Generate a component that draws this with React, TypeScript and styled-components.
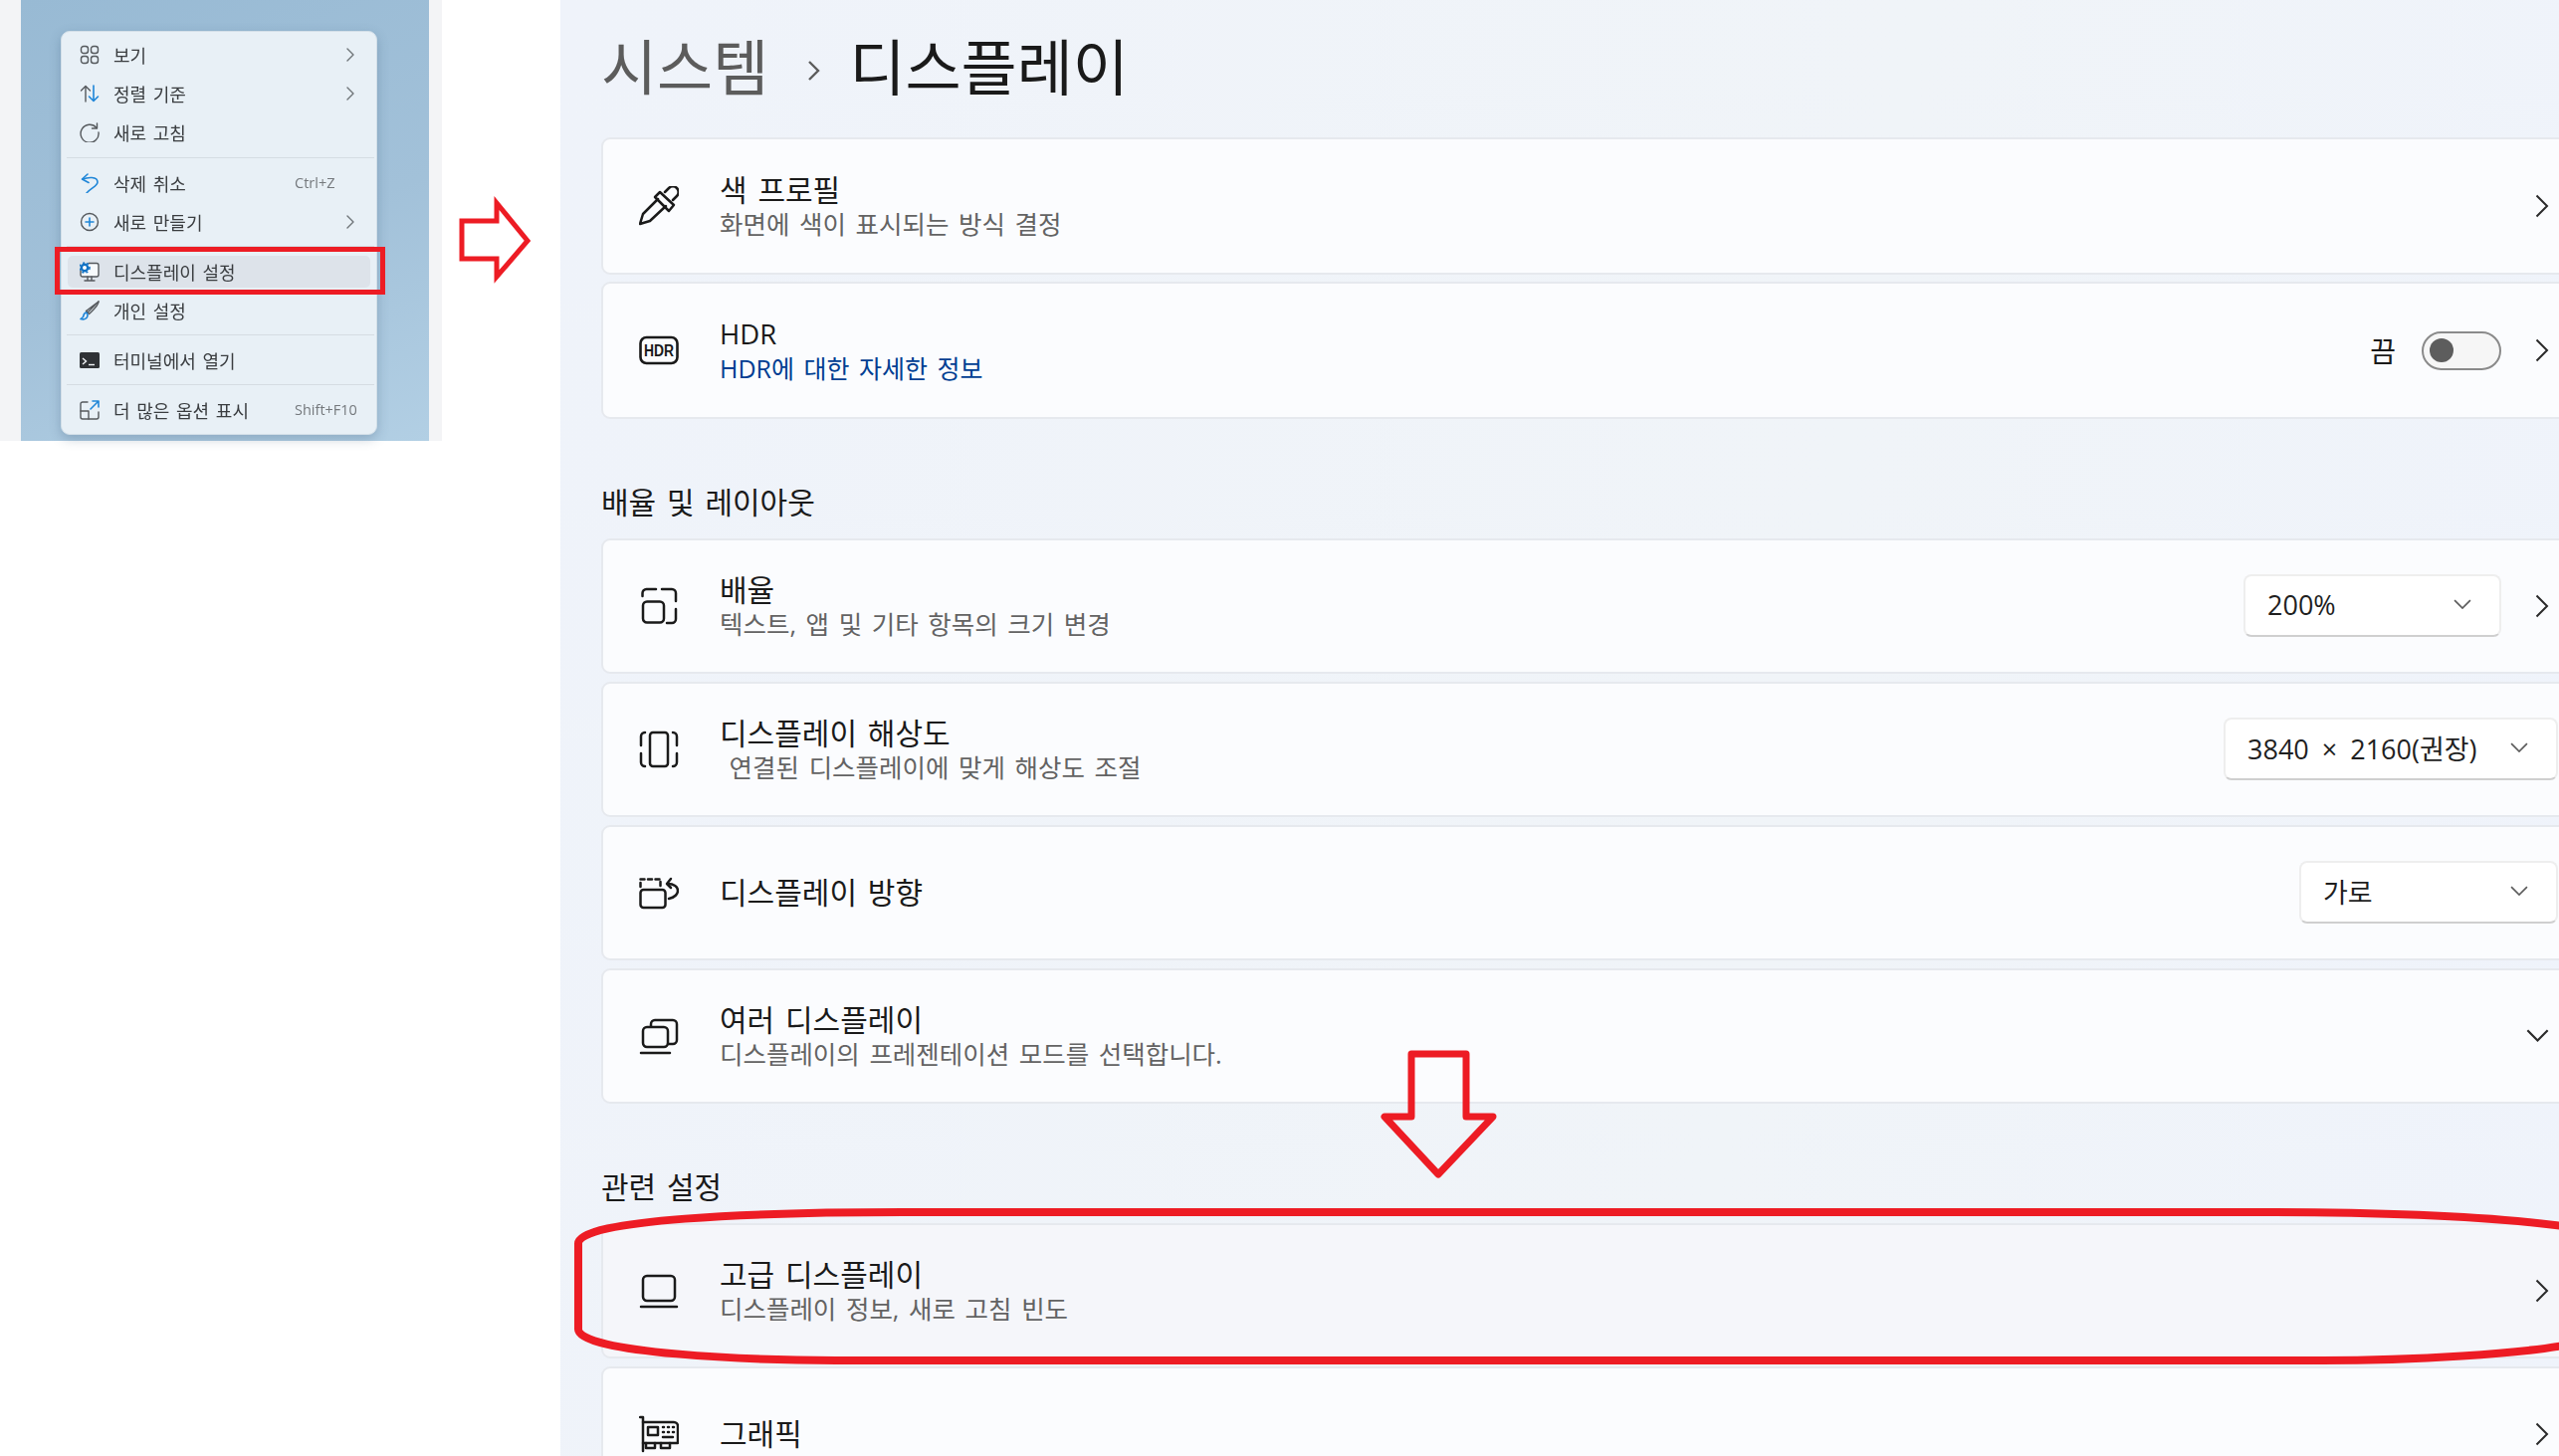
import React from 'react'
import styled, { createGlobalStyle } from 'styled-components'

const GlobalStyle = createGlobalStyle`
  html, body {
    margin: 0;
    padding: 0;
    background: #ffffff;
    overflow: hidden;
  }
  body {
    font-family: "Open Sans", "Noto Sans CJK KR", sans-serif;
    color: #1a1a1a;
  }
`

const Page = styled.div`
  position: relative;
  display: flex;
  width: 2571px;
  height: 1463px;
  overflow: hidden;
  background: #ffffff;
`

/* left: context menu capture */
const Shot = styled.div`
  flex: none;
  width: 444px;
  height: 443px;
  padding: 0 13px 0 21px;
  box-sizing: border-box;
  background: #f3f4f6;
`
const Desktop = styled.div`
  height: 100%;
  padding: 31px 0 0 40px;
  box-sizing: border-box;
  background: linear-gradient(160deg, #98bad4 0%, #a2c1d9 55%, #b2cfe4 100%);
`
const Menu = styled.div`
  display: flex;
  flex-direction: column;
  width: 318px;
  height: 406px;
  padding-top: 3px;
  box-sizing: border-box;
  background: #e8f0f6;
  border: 1px solid #d3dfe8;
  border-radius: 9px;
  box-shadow: 0 4px 12px rgba(60, 90, 120, 0.3);
  filter: blur(0.35px);
`
const MenuItem = styled.div<{ $active?: boolean }>`
  flex: none;
  display: flex;
  align-items: center;
  height: 32px;
  margin: 3.5px 6px;
  padding: 0 12px;
  gap: 14px;
  border-radius: 5px;
  background: ${({ $active }) => ($active ? '#dde3ea' : 'transparent')};
  svg {
    flex: none;
  }
`
const MenuLabel = styled.span`
  flex: 1;
  font-size: 18px;
  word-spacing: 2px;
  color: #3a3d40;
  white-space: nowrap;
`
const MenuHint = styled.span`
  flex: none;
  width: 64px;
  font-size: 14.5px;
  color: #75797d;
  white-space: nowrap;
`
const MenuSep = styled.div<{ $first?: boolean }>`
  flex: none;
  height: 1px;
  margin: ${({ $first }) => ($first ? '6px' : '5px')} 2px 5px 5px;
  background: #d5dce2;
`

/* right: settings window */
const Settings = styled.main`
  flex: none;
  width: 2027px;
  height: 1463px;
  margin-left: 119px;
  padding-left: 41px;
  box-sizing: border-box;
  background: linear-gradient(100deg, #eff3fa 0%, #f0f4f8 60%, #eff3fb 100%);
`
const Header = styled.header`
  display: flex;
  align-items: center;
  height: 138px;
  padding-bottom: 3px;
  box-sizing: border-box;
  font-size: 61px;
  line-height: 76px;
  white-space: nowrap;
`
const Crumb = styled.span`
  color: #5c5c5c;
`
const CrumbArrow = styled.span`
  display: flex;
  margin: 6px 27px 0 38px;
  color: #5c5c5c;
`
const CrumbNow = styled.span`
  color: #1a1a1a;
`
const Group = styled.section<{ $tight?: boolean }>`
  display: flex;
  flex-direction: column;
  gap: ${({ $tight }) => ($tight ? '7px' : '8px')};
`
const SectionLabel = styled.h2`
  margin: 66px 0 18px;
  font-size: 30px;
  font-weight: 400;
  line-height: 36px;
  word-spacing: 3px;
  color: #1a1a1a;
`
const Card = styled.div<{ $hover?: boolean; $tall?: boolean }>`
  flex: none;
  display: flex;
  align-items: center;
  width: 1976px;
  height: ${({ $tall }) => ($tall ? '138px' : '136px')};
  padding: 0 17px 0 36px;
  box-sizing: border-box;
  background: ${({ $hover }) => ($hover ? '#f5f6fa' : '#fbfcfe')};
  border: 2px solid #e6e9ee;
  border-radius: 9px;
`
const CardIcon = styled.div`
  flex: none;
  display: flex;
  width: 40px;
  height: 40px;
  margin-right: 41px;
  color: #1a1a1a;
`
const CardText = styled.div`
  flex: 1;
  min-width: 0;
  white-space: nowrap;
`
const CardTitle = styled.div<{ $latin?: boolean }>`
  font-size: ${({ $latin }) => ($latin ? '27.5px' : '30px')};
  line-height: 36px;
  word-spacing: 3px;
  color: #1a1a1a;
`
const CardSub = styled.div<{ $link?: boolean }>`
  font-size: ${({ $link }) => ($link ? '25px' : '25.5px')};
  line-height: 33px;
  word-spacing: 3px;
  color: ${({ $link }) => ($link ? '#003e92' : '#636363')};
`
const Arrow = styled.span`
  flex: none;
  display: flex;
  margin-left: 34px;
  color: #2a2a2a;
`
const ToggleLabel = styled.span`
  font-size: 28px;
  margin-right: 26px;
  color: #1a1a1a;
`
const Toggle = styled.span`
  flex: none;
  display: flex;
  align-items: center;
  width: 80px;
  height: 39px;
  padding-left: 6px;
  box-sizing: border-box;
  background: #f6f6f6;
  border: 2px solid #8a8a8a;
  border-radius: 20px;
  &::before {
    content: '';
    width: 24px;
    height: 24px;
    border-radius: 50%;
    background: #5d5d5d;
  }
`
const Select = styled.div<{ $width: number; $flush?: boolean }>`
  flex: none;
  display: flex;
  align-items: center;
  justify-content: space-between;
  width: ${({ $width }) => $width}px;
  height: 63px;
  margin: 0 ${({ $flush }) => ($flush ? '-9px' : '0')} 2px 0;
  padding: 0 28px 2px 22px;
  box-sizing: border-box;
  font-size: 27px;
  color: #1f1f1f;
  background: #ffffff;
  border: 2px solid #eeeeee;
  border-bottom-color: #cfcfcf;
  border-radius: 8px;
  white-space: nowrap;
  word-spacing: 6px;
`
const SelectArrow = styled.span`
  display: flex;
  color: #5c5c5c;
`
const Annotations = styled.svg`
  position: absolute;
  left: 0;
  top: 0;
  pointer-events: none;
`
const HdrText = styled.text`
  font-family: "Liberation Sans", sans-serif;
  font-size: 16px;
  font-weight: 700;
  fill: #1a1a1a;
`

const stroke = { fill: 'none', stroke: 'currentColor', strokeWidth: 2.5, strokeLinecap: 'round', strokeLinejoin: 'round' } as const
const thin = { fill: 'none', stroke: '#55595d', strokeWidth: 1.4, strokeLinecap: 'round', strokeLinejoin: 'round' } as const
const blue = { ...thin, stroke: '#1f86d8', strokeWidth: 1.6 }

const Big = ({ children }: { children: React.ReactNode }) => (
  <svg width="40" height="40" viewBox="0 0 40 40" {...stroke}>{children}</svg>
)
const Small = ({ children }: { children: React.ReactNode }) => (
  <svg width="20" height="20" viewBox="0 0 20 20" {...thin}>{children}</svg>
)

const settingsIcons: Record<string, React.ReactNode> = {
  dropper: (
    <Big>
      <path d="M19 13L4 28l-3 10 10-3 16-15" />
      <polygon points="21,6 16,11 30,25 35,19" />
      <path d="M26 6l4-4a5.6 5.6 0 0 1 8 8l-4 4" />
    </Big>
  ),
  hdr: (
    <svg width="40" height="40" viewBox="0 0 40 40">
      <rect x="1.5" y="7" width="37" height="26" rx="6" fill="none" stroke="currentColor" strokeWidth="2.6" />
      <HdrText x="20" y="26" textAnchor="middle" textLength="30" lengthAdjust="spacingAndGlyphs">HDR</HdrText>
    </svg>
  ),
  scale: (
    <Big>
      <rect x="4" y="15.5" width="21" height="21" rx="4" />
      <path d="M3.5 10V7a4 4 0 0 1 4-4H17" />
      <path d="M23 3h10a4 4 0 0 1 4 4v8" />
      <path d="M37 23v10a4 4 0 0 1-4 4h-5" />
    </Big>
  ),
  resolution: (
    <Big>
      <rect x="11" y="3" width="18" height="34" rx="3" />
      <path d="M6 3a4 4 0 0 0-4 4v9M2 24v9a4 4 0 0 0 4 4" />
      <path d="M34 3a4 4 0 0 1 4 4v9M38 24v9a4 4 0 0 1-4 4" />
    </Big>
  ),
  orientation: (
    <Big>
      <rect x="1.5" y="17" width="25" height="18" rx="3" />
      <path d="M1.5 14V6.5h20V14" strokeDasharray="4 3.5" />
      <path d="M30 26c6-1 9-5 9-8 0-4-4-7-10-7" />
      <path d="M32 6l-4 5 4 4" />
    </Big>
  ),
  multi: (
    <Big>
      <path d="M12 10V8a4 4 0 0 1 4-4h18a4 4 0 0 1 4 4v16a4 4 0 0 1-4 4h-5" />
      <rect x="4" y="11" width="25" height="20" rx="4" />
      <path d="M2 37h29" />
    </Big>
  ),
  laptop: (
    <Big>
      <rect x="4" y="5" width="32" height="25" rx="4" />
      <path d="M2 36h36" />
    </Big>
  ),
  gpu: (
    <Big>
      <path d="M1 3h3v34" />
      <path d="M4 8h31a4 4 0 0 1 4 4v17H4" />
      <rect x="9" y="13" width="10" height="8" />
      <path d="M24 13h1M29 13h1M34 13h1M24 18h1M29 18h1M34 18h1M24 23h10" />
      <path d="M7 29v5h9v-5M22 29v5h9v-5" />
    </Big>
  ),
}

const ChevronRight = () => (
  <svg width="14" height="24" viewBox="0 0 14 24" fill="none" stroke="currentColor" strokeWidth="2">
    <path d="M1.5 1.5L12 12L1.5 22.5" />
  </svg>
)
const ChevronDown = ({ size = 18 }: { size?: number }) => (
  <svg width={size} height={size / 1.7} viewBox="0 0 17 10" fill="none" stroke="currentColor" strokeWidth="1.6">
    <path d="M1 1l7.5 7.5L16 1" />
  </svg>
)
const MenuChevron = () => (
  <svg width="16" height="14" viewBox="0 0 16 14" {...thin} stroke="#6f7478">
    <path d="M5 1l6 6-6 6" />
  </svg>
)

const SettingsRow = ({ icon, title, sub, link, hover, tall, latin, children }: {
  icon: string
  title: string
  sub?: string
  link?: boolean
  hover?: boolean
  tall?: boolean
  latin?: boolean
  children?: React.ReactNode
}) => (
  <Card $hover={hover} $tall={tall}>
    <CardIcon>{settingsIcons[icon]}</CardIcon>
    <CardText>
      <CardTitle $latin={latin}>{title}</CardTitle>
      {sub && <CardSub $link={link}>{sub}</CardSub>}
    </CardText>
    {children}
  </Card>
)

const Go = () => (
  <Arrow><ChevronRight /></Arrow>
)

const DropValue = ({ value, width, flush }: { value: string; width: number; flush?: boolean }) => (
  <Select $width={width} $flush={flush}>
    {value}
    <SelectArrow><ChevronDown /></SelectArrow>
  </Select>
)

export default function App() {
  return (
    <Page>
      <GlobalStyle />
      <Shot>
        <Desktop>
          <Menu>
            <MenuItem>
              <Small>
                <rect x="1.5" y="1.5" width="7" height="7" rx="2.5" />
                <rect x="11.5" y="1.5" width="7" height="7" rx="2.5" />
                <rect x="1.5" y="11.5" width="7" height="7" rx="2.5" />
                <rect x="11.5" y="11.5" width="7" height="7" rx="2.5" />
              </Small>
              <MenuLabel>보기</MenuLabel>
              <MenuChevron />
            </MenuItem>
            <MenuItem>
              <Small>
                <path d="M6 18V3M1.5 7L6 2.5 10.5 7" />
                <path {...blue} d="M14 2v15M9.5 13l4.5 4.5 4.5-4.5" />
              </Small>
              <MenuLabel>정렬 기준</MenuLabel>
              <MenuChevron />
            </MenuItem>
            <MenuItem>
              <Small>
                <path d="M17 5.5A9 9 0 1 0 19 10" />
                <path d="M17.5 1v5h-5" />
              </Small>
              <MenuLabel>새로 고침</MenuLabel>
            </MenuItem>
            <MenuSep $first />
            <MenuItem>
              <Small>
                <path {...blue} d="M3 6c5-2 15-3 15 3 0 4-7 6-11 11" />
                <path {...blue} d="M8 1L2.5 6 9 9.5" />
              </Small>
              <MenuLabel>삭제 취소</MenuLabel>
              <MenuHint>Ctrl+Z</MenuHint>
            </MenuItem>
            <MenuItem>
              <Small>
                <circle cx="10" cy="10" r="8.5" />
                <path {...blue} d="M10 6v8M6 10h8" />
              </Small>
              <MenuLabel>새로 만들기</MenuLabel>
              <MenuChevron />
            </MenuItem>
            <MenuSep />
            <MenuItem $active>
              <Small>
                <path d="M9 1.5h8a2 2 0 0 1 2 2v9.5a2 2 0 0 1-2 2H3a2 2 0 0 1-2-2V9" fill="#f7fafc" />
                <path d="M8 15v3.5M12 15v3.5M5 19h10" />
                <circle cx="5" cy="6" r="3.2" fill="#ffffff" stroke="#1272c4" strokeWidth="2.4" />
                <circle cx="5" cy="6" r="5" fill="none" stroke="#1272c4" strokeWidth="1.6" strokeDasharray="2 2.2" strokeLinecap="butt" />
              </Small>
              <MenuLabel>디스플레이 설정</MenuLabel>
            </MenuItem>
            <MenuItem>
              <Small>
                <path d="M19 1L8 12l-1.5-1.5z" />
                <path d="M19 1c0 4-6 9-9.5 12.5L6.5 10.5" />
                <path {...blue} d="M7 12c-3 0-3 3-3.5 4.5L1 18.5c3 1 7 0 7-4z" />
              </Small>
              <MenuLabel>개인 설정</MenuLabel>
            </MenuItem>
            <MenuSep />
            <MenuItem>
              <svg width="20" height="16" viewBox="0 0 20 16">
                <rect width="20" height="16" rx="1.5" fill="#2f3235" />
                <path d="M3 6l3.5 3L3 12" fill="none" stroke="#f2f5f7" strokeWidth="1.4" />
                <path d="M9 12.5h6" stroke="#f2f5f7" strokeWidth="1.4" />
              </svg>
              <MenuLabel>터미널에서 열기</MenuLabel>
            </MenuItem>
            <MenuSep />
            <MenuItem>
              <Small>
                <path d="M8 2H3a2 2 0 0 0-2 2v13a2 2 0 0 0 2 2h14a2 2 0 0 0 2-2v-5" />
                <path d="M1 11h8v8" />
                <path {...blue} d="M11 9l8-8M13 1h6v6" />
              </Small>
              <MenuLabel>더 많은 옵션 표시</MenuLabel>
              <MenuHint>Shift+F10</MenuHint>
            </MenuItem>
          </Menu>
        </Desktop>
      </Shot>

      <Settings>
        <Header>
          <Crumb>시스템</Crumb>
          <CrumbArrow>
            <svg width="16" height="24" viewBox="0 0 16 24" fill="none" stroke="currentColor" strokeWidth="2.4">
              <path d="M3 3l9 9-9 9" />
            </svg>
          </CrumbArrow>
          <CrumbNow>디스플레이</CrumbNow>
        </Header>
        <Group $tight>
          <SettingsRow icon="dropper" title="색 프로필" sub="화면에 색이 표시되는 방식 결정" tall>
            <Go />
          </SettingsRow>
          <SettingsRow icon="hdr" title="HDR" sub="HDR에 대한 자세한 정보" link tall latin>
            <ToggleLabel>끔</ToggleLabel>
            <Toggle />
            <Go />
          </SettingsRow>
        </Group>
        <SectionLabel>배율 및 레이아웃</SectionLabel>
        <Group>
          <SettingsRow icon="scale" title="배율" sub="텍스트, 앱 및 기타 항목의 크기 변경">
            <DropValue value="200%" width={259} />
            <Go />
          </SettingsRow>
          <SettingsRow icon="resolution" title="디스플레이 해상도" sub={'\u00a0연결된 디스플레이에 맞게 해상도 조절'}>
            <DropValue value="3840 × 2160(권장)" width={336} flush />
          </SettingsRow>
          <SettingsRow icon="orientation" title="디스플레이 방향">
            <DropValue value="가로" width={260} flush />
          </SettingsRow>
          <SettingsRow icon="multi" title="여러 디스플레이" sub="디스플레이의 프레젠테이션 모드를 선택합니다.">
            <Arrow><ChevronDown size={23} /></Arrow>
          </SettingsRow>
        </Group>
        <SectionLabel>관련 설정</SectionLabel>
        <Group>
          <SettingsRow icon="laptop" title="고급 디스플레이" sub="디스플레이 정보, 새로 고침 빈도" hover>
            <Go />
          </SettingsRow>
          <SettingsRow icon="gpu" title="그래픽">
            <Go />
          </SettingsRow>
        </Group>
      </Settings>

      <Annotations width="2571" height="1463" viewBox="0 0 2571 1463" fill="none" stroke="#ed1c24">
        <rect x="57.5" y="250.5" width="327" height="43" strokeWidth="5" />
        <polygon points="464,222 499,222 499,204 530,242 499,278 499,260 464,260" strokeWidth="5" />
        <polygon points="1418,1059 1473,1059 1473,1122 1500,1122 1445,1180 1391,1122 1418,1122" strokeWidth="7" strokeLinejoin="round" />
        <path
          d="M2575 1232C2500 1222 2400 1218 2266 1218H907C760 1218 579 1225 581 1250V1335C579 1360 760 1367 840 1367H2333C2430 1367 2530 1360 2575 1352"
          strokeWidth="8"
        />
      </Annotations>
    </Page>
  )
}
